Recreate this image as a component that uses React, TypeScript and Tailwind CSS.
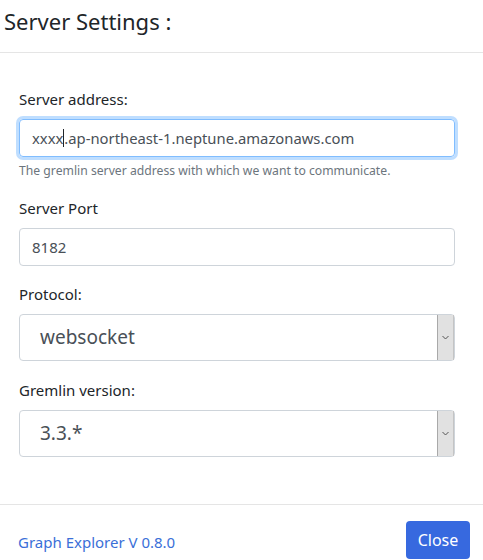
export default function App() {
  const font = { fontFamily: '"Noto Sans", "Open Sans", sans-serif' };
  return (
    <div style={font} className="w-[483px] h-[560px] bg-white overflow-hidden text-[#212529]">
      <div className="h-[53px] border-b border-[#e5e5e5] pl-[4px] pt-[6px]">
        <h5 className="text-[22px] leading-[30px] text-[#212529]">Server Settings :</h5>
      </div>

      <div className="pl-[19px] pr-[28px] pt-[34px] h-[452px] border-b border-[#e5e5e5]">
        <label className="block text-[15px] leading-[24px] mb-[8px]">Server address:</label>
        <div className="h-[38px] rounded-[4px] border border-[#80bdff] shadow-[0_0_0_3px_rgba(0,123,255,0.25)] flex items-center pl-[12px] text-[14.8px] text-[#495057]">
          <span>xxxx</span>
          <span className="inline-block w-px h-[18px] bg-[#212529]" />
          <span>.ap-northeast-1.neptune.amazonaws.com</span>
        </div>
        <p className="mt-[4px] text-[12.2px] leading-[19px] text-[#6c757d]">
          The gremlin server address with which we want to communicate.
        </p>

        <label className="block mt-[16px] text-[15px] leading-[24px] mb-[8px]">Server Port</label>
        <div className="h-[38px] rounded-[4px] border border-[#ced4da] flex items-center pl-[12px] text-[15px] text-[#495057]">
          8182
        </div>

        <label className="block mt-[16px] text-[15px] leading-[24px] mb-[8px]">Protocol:</label>
        <SelectBox value="websocket" />

        <label className="block mt-[17px] text-[15px] leading-[24px] mb-[8px]">Gremlin version:</label>
        <SelectBox value="3.3.*" />
      </div>

      <div className="flex items-center justify-between pl-[18px] pr-[13px] pt-[16px]">
        <a className="text-[15px] text-[#3a6fd8] mt-[5px]">Graph Explorer V 0.8.0</a>
        <button className="h-[38px] w-[64px] rounded-[4px] bg-[#3769df] text-white text-[16px]">Close</button>
      </div>
    </div>
  );
}

function SelectBox({ value }: { value: string }) {
  return (
    <div className="h-[47px] rounded-[4px] border border-[#ced4da] flex items-stretch">
      <div className="flex-1 flex items-center pl-[20px] text-[19px] text-[#495057]">{value}</div>
      <div className="w-[17px] bg-[#e1e1e1] border-l border-[#a9a9a9] border-r border-r-[#c4c4c4] flex items-center justify-center">
        <svg width="7" height="5" viewBox="0 0 7 5" fill="none">
          <path d="M0.5 1L3.5 4L6.5 1" stroke="#555" strokeWidth="1" />
        </svg>
      </div>
    </div>
  );
}
